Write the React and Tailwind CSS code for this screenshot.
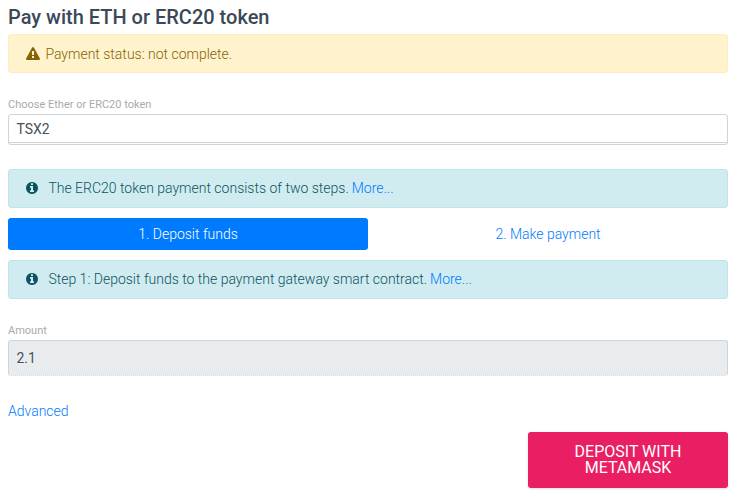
function WarningIcon() {
  return (
    <svg viewBox="0 0 1792 1664" fill="currentColor" className="mr-[5px] h-[13px] w-[14px] shrink-0">
      <path d="M1024 1375v-190q0-14-9.5-23.5t-22.5-9.5h-192q-13 0-22.5 9.5t-9.5 23.5v190q0 14 9.5 23.5t22.5 9.5h192q13 0 22.5-9.5t9.5-23.5zm-2-374l18-459q0-12-10-19-13-11-24-11h-220q-11 0-24 11-10 7-10 21l17 457q0 10 10 16.5t24 6.5h185q14 0 23.5-6.5t10.5-16.5zm-14-934l768 1408q35 63-2 126-17 29-46.5 46t-63.5 17h-1536q-34 0-63.5-17t-46.5-46q-37-63-2-126l768-1408q17-31 47-49t65-18 65 18 47 49z" />
    </svg>
  );
}

function InfoIcon() {
  return (
    <svg viewBox="128 128 1536 1536" fill="currentColor" className="mr-[10px] mb-px size-[12px] shrink-0">
      <path d="M1152 1376v-160q0-14-9-23t-23-9h-96v-512q0-14-9-23t-23-9h-320q-14 0-23 9t-9 23v160q0 14 9 23t23 9h96v320h-96q-14 0-23 9t-9 23v160q0 14 9 23t23 9h448q14 0 23-9t9-23zm-128-896v-160q0-14-9-23t-23-9h-192q-14 0-23 9t-9 23v160q0 14 9 23t23 9h192q14 0 23-9t9-23zm640 416q0 209-103 385.5t-279.5 279.5-385.5 103-385.5-103-279.5-279.5-103-385.5 103-385.5 279.5-279.5 385.5-103 385.5 103 279.5 279.5 103 385.5z" />
    </svg>
  );
}

function Info({ children }) {
  return (
    <div className="flex h-[39px] items-center rounded-[3px] border border-[#bee5eb] bg-[#d1ecf1] pl-[17.4px] text-[#0c5460]">
      <InfoIcon />
      <span>{children} <a className="-ml-[0.5px] text-[#007bff]">More...</a></span>
    </div>
  );
}

export default function App() {
  return (
    <main className="flex h-[498px] w-[736px] flex-col bg-white px-2 font-['Roboto',sans-serif] text-[14px] leading-[21px] font-light antialiased">
      <h1 className="h-[34px] pt-[5px] text-[20px] leading-6 font-medium text-[#3c4858]">Pay with ETH or ERC20 token</h1>
      <div className="flex h-[39px] items-center rounded-[3px] border border-[#ffeeba] bg-[#fff3cd] pl-[17.4px] text-[#856404]">
        <WarningIcon />
        <span className="pt-px leading-[22px]">Payment status: not complete.</span>
      </div>
      <label className="mt-[24px] h-[17px] text-[11px] leading-[15px] font-normal text-[#aaa]">Choose Ether or ERC20 token</label>
      <div className="flex h-[31px] flex-col rounded-[3px] border border-[#ced4da] font-normal text-[#495057]">
        <div className="h-[28px] border-b border-[#d2d2d2] pt-[4px] pl-[7.5px]">TSX2</div>
      </div>
      <div className="mt-[24px]"><Info>The ERC20 token payment consists of two steps.</Info></div>
      <nav className="mt-[10px] flex h-8">
        <div className="flex flex-1 items-center justify-center rounded-[3px] bg-[#007bff] text-white">1. Deposit funds</div>
        <div className="flex flex-1 items-center justify-center text-[#007bff]">2. Make payment</div>
      </nav>
      <div className="mt-[10px]"><Info>Step 1: Deposit funds to the payment gateway smart contract.</Info></div>
      <label className="mt-[24px] h-[17px] text-[11px] leading-[15px] font-normal text-[#aaa]">Amount</label>
      <div className="flex h-[36px] items-center rounded-[3px] border border-[#ced4da] border-b-[#d2d2d2] bg-[#e9ecef] bg-clip-padding px-[7.5px] font-normal text-[#495057] [border-bottom-style:dotted]">2.1</div>
      <a className="mt-[25px] text-[#007bff]">Advanced</a>
      <button className="mt-[10px] h-[56px] w-[200px] self-end rounded-[3px] bg-[#e91e63] px-8 text-[16px] leading-4 font-normal text-white shadow">DEPOSIT WITH METAMASK</button>
    </main>
  );
}
